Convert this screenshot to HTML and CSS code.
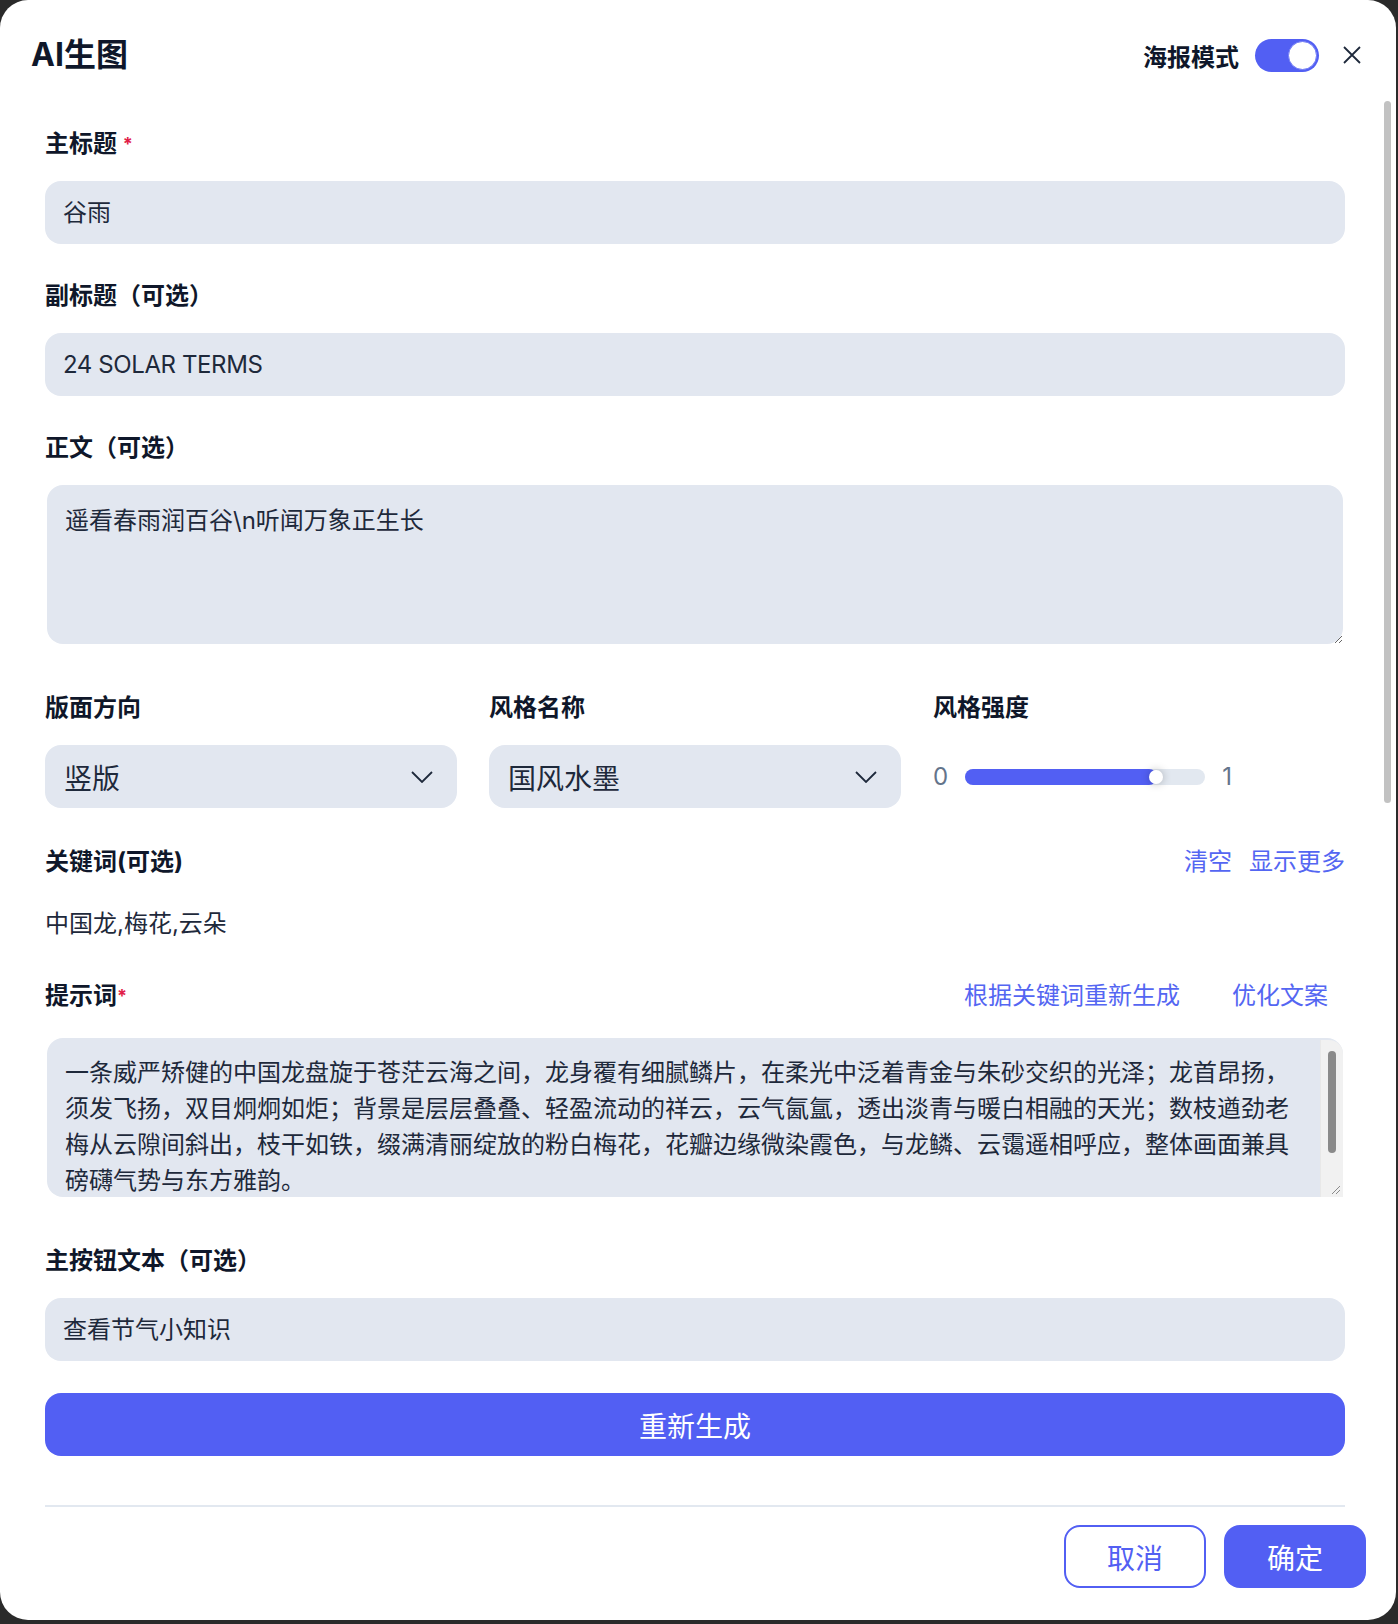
FILE: index.html
```html
<!DOCTYPE html>
<html lang="zh-CN">

<head>
    <meta charset="UTF-8">
    <meta name="viewport" content="width=device-width, initial-scale=1.0">
    <title>AI生图</title>
    <link rel="stylesheet" href="styles.css">
</head>

<body>
    <div class="dialog">
        <div class="header">
            <h1>AI生图</h1>
            <div class="header-right">
                <span class="mode-label">海报模式</span>
                <div class="toggle"><span class="knob"></span></div>
                <svg class="close" width="20" height="20" viewBox="0 0 20 20">
                    <path d="M2 2 L18 18 M18 2 L2 18" stroke="#1e293b" stroke-width="1.8" fill="none" />
                </svg>
            </div>
        </div>

        <div class="scroll-thumb"></div>

        <div class="content">
            <div class="field">
                <div class="label">主标题 <span class="req">*</span></div>
                <div class="input">谷雨</div>
            </div>

            <div class="field">
                <div class="label">副标题（可选）</div>
                <div class="input input-latin">24 SOLAR TERMS</div>
            </div>

            <div class="field field-body">
                <div class="label">正文（可选）</div>
                <textarea class="area" readonly>遥看春雨润百谷\n听闻万象正生长</textarea>
            </div>

            <div class="row">
                <div class="col">
                    <div class="label">版面方向</div>
                    <div class="select">
                        <span>竖版</span>
                        <svg width="22" height="12" viewBox="0 0 22 12">
                            <polyline points="1,1 11,11 21,1" stroke="#1e293b" stroke-width="1.8" fill="none" />
                        </svg>
                    </div>
                </div>
                <div class="col">
                    <div class="label">风格名称</div>
                    <div class="select">
                        <span>国风水墨</span>
                        <svg width="22" height="12" viewBox="0 0 22 12">
                            <polyline points="1,1 11,11 21,1" stroke="#1e293b" stroke-width="1.8" fill="none" />
                        </svg>
                    </div>
                </div>
                <div class="col">
                    <div class="label">风格强度</div>
                    <div class="slider">
                        <span class="num">0</span>
                        <div class="track">
                            <div class="fill" style="width: 80%"><span class="thumb"></span></div>
                        </div>
                        <span class="num">1</span>
                    </div>
                </div>
            </div>

            <div class="keywords">
                <div class="label-row">
                    <div class="label">关键词(可选)</div>
                    <div class="links">
                        <a>清空</a>
                        <a>显示更多</a>
                    </div>
                </div>
                <div class="kw-text">中国龙,梅花,云朵</div>
            </div>

            <div class="prompt-field">
                <div class="label-row">
                    <div class="label">提示词<span class="req">*</span></div>
                    <div class="links links-wide">
                        <a>根据关键词重新生成</a>
                        <a>优化文案</a>
                    </div>
                </div>
                <div class="prompt-wrap">
                    <textarea class="area prompt" readonly>一条威严矫健的中国龙盘旋于苍茫云海之间，龙身覆有细腻鳞片，在柔光中泛着青金与朱砂交织的光泽；龙首昂扬，须发飞扬，双目炯炯如炬；背景是层层叠叠、轻盈流动的祥云，云气氤氲，透出淡青与暖白相融的天光；数枝遒劲老梅从云隙间斜出，枝干如铁，缀满清丽绽放的粉白梅花，花瓣边缘微染霞色，与龙鳞、云霭遥相呼应，整体画面兼具磅礴气势与东方雅韵。</textarea>
                    <div class="vscroll">
                        <span class="vscroll-thumb"></span>
                        <svg class="grip" width="12" height="12" viewBox="0 0 12 12">
                            <path d="M11 3 L3 11 M11 7 L7 11" stroke="#8a8a8a" stroke-width="1" fill="none" />
                        </svg>
                    </div>
                </div>
            </div>

            <div class="field">
                <div class="label">主按钮文本（可选）</div>
                <div class="input">查看节气小知识</div>
            </div>

            <button class="regen">重新生成</button>

            <div class="divider"></div>
        </div>

        <div class="footer">
            <button class="btn btn-ghost">取消</button>
            <button class="btn btn-primary">确定</button>
        </div>
    </div>
</body>

</html>
```

FILE: styles.css
```css
body {
    margin: 0;
    padding: 0;
    background-color: #2a2a2a;
    font-family: "Inter", "Noto Sans CJK SC", sans-serif;
    color: #0f172a;
}

.dialog {
    position: relative;
    width: 1396px;
    height: 1620px;
    background-color: #fff;
    border-radius: 28px;
    overflow: hidden;
}

.header {
    display: flex;
    justify-content: space-between;
    align-items: center;
    height: 40px;
    padding: 35px 34px 0 31px;
}

.header h1 {
    margin: 0;
    font-size: 32px;
    font-weight: 700;
    line-height: 40px;
    color: #0f172a;
}

.header-right {
    display: flex;
    align-items: center;
}

.mode-label {
    font-size: 24px;
    font-weight: 700;
    margin-right: 16px;
}

.toggle {
    width: 64px;
    height: 33px;
    border-radius: 17px;
    background-color: #525ff3;
    display: flex;
    align-items: center;
    justify-content: flex-end;
    box-sizing: border-box;
    padding-right: 2px;
    margin-right: 23px;
}

.knob {
    width: 29px;
    height: 29px;
    border-radius: 50%;
    background-color: #fff;
    box-sizing: border-box;
    border: 1px solid #6f7af5;
}

/* page scrollbar thumb */
.scroll-thumb {
    position: absolute;
    left: 1384px;
    top: 101px;
    width: 7px;
    height: 702px;
    border-radius: 4px;
    background-color: #c2c2c2;
}

.content {
    padding: 53px 51px 0 45px;
}

.label {
    font-size: 24px;
    font-weight: 700;
    line-height: 32px;
    height: 32px;
    margin-bottom: 21px;
}

.req {
    color: #e11d48;
    font-size: 18px;
    vertical-align: top;
}

.field {
    margin-bottom: 36px;
}

.field-body {
    margin-bottom: 48px;
}

.input {
    height: 63px;
    line-height: 63px;
    border-radius: 16px;
    background-color: #e2e7f0;
    padding: 0 18px;
    font-size: 24px;
    color: #1e293b;
}

.input-latin {
    letter-spacing: -0.4px;
}

.area {
    display: block;
    width: 1296px;
    height: 159px;
    margin: 4px 0 0 2px;
    box-sizing: border-box;
    border: none;
    outline: none;
    border-radius: 16px;
    background-color: #e2e7f0;
    padding: 18px 16px 18px 18px;
    font-family: "Inter", "Noto Sans CJK SC", sans-serif;
    font-size: 24px;
    line-height: 36px;
    color: #1e293b;
}

.prompt-wrap {
    position: relative;
}

.prompt {
    margin-top: 0;
    padding: 17px 39px 18px 18px;
    overflow: hidden;
    resize: none;
}

/* textarea scrollbar drawn over the field */
.vscroll {
    position: absolute;
    top: 2px;
    right: 2px;
    bottom: 0;
    width: 22px;
    background-color: #f1f1f1;
    border-left: 1px solid #e8e8e8;
    border-top-right-radius: 14px;
}

.vscroll-thumb {
    position: absolute;
    left: 7px;
    top: 11px;
    width: 8px;
    height: 102px;
    border-radius: 4px;
    background-color: #8a8a8a;
}

.grip {
    position: absolute;
    right: 2px;
    bottom: 2px;
}

.row {
    display: grid;
    grid-template-columns: 1fr 1fr 1fr;
    column-gap: 32px;
    margin-bottom: 38px;
}

.select {
    height: 63px;
    border-radius: 16px;
    background-color: #e2e7f0;
    display: flex;
    align-items: center;
    justify-content: space-between;
    padding: 0 24px 0 19px;
    font-size: 28px;
    color: #1e293b;
}

.slider {
    height: 63px;
    display: flex;
    align-items: center;
}

.num {
    font-size: 24px;
    color: #64748b;
}

.track {
    width: 240px;
    height: 16px;
    border-radius: 8px;
    background-color: #e2e8f0;
    margin: 0 17px;
}

.fill {
    position: relative;
    height: 16px;
    border-radius: 8px;
    background-color: #525ff3;
}

.thumb {
    position: absolute;
    right: -6px;
    top: 1px;
    width: 14px;
    height: 14px;
    border-radius: 50%;
    background-color: #fff;
    box-shadow: 0 0 8px rgba(0, 0, 0, 0.25);
}

.label-row {
    display: flex;
    justify-content: space-between;
    align-items: center;
}

.links {
    display: flex;
    gap: 17px;
    font-size: 24px;
    line-height: 32px;
    color: #5466f2;
    margin-bottom: 21px;
}

.links-wide {
    gap: 52px;
    margin-right: 17px;
}

.keywords {
    margin-bottom: 40px;
}

.kw-text {
    font-size: 24px;
    line-height: 32px;
    margin-top: 9px;
    color: #1e293b;
}

.prompt-field {
    margin-bottom: 48px;
}

.prompt-field .label-row .label,
.prompt-field .links {
    margin-bottom: 26px;
}

.regen {
    display: block;
    width: 100%;
    height: 63px;
    margin-top: -4px;
    border: none;
    border-radius: 16px;
    background-color: #525ff3;
    color: #fff;
    font-family: "Inter", "Noto Sans CJK SC", sans-serif;
    font-size: 28px;
}

.divider {
    height: 2px;
    background-color: #e2e8f0;
    margin-top: 49px;
}

.footer {
    display: flex;
    justify-content: flex-end;
    gap: 18px;
    padding: 18px 30px 0 0;
}

.btn {
    width: 142px;
    height: 63px;
    border-radius: 16px;
    font-family: "Inter", "Noto Sans CJK SC", sans-serif;
    font-size: 28px;
}

.btn-ghost {
    background-color: #fff;
    border: 2px solid #525ff3;
    color: #525ff3;
}

.btn-primary {
    background-color: #525ff3;
    border: none;
    color: #fff;
}
```
